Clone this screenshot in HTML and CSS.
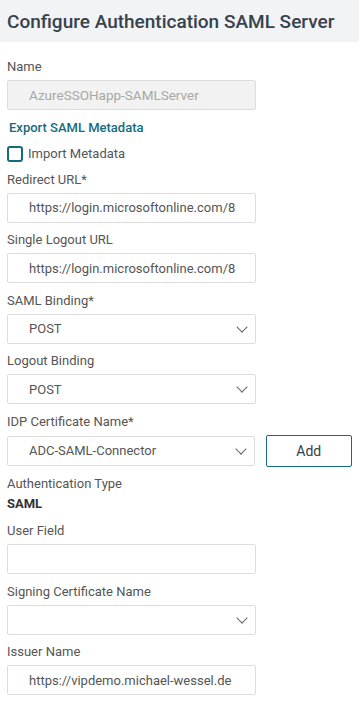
FILE: index.html
```html
<!DOCTYPE html>
<html lang="en">
<head>
    <meta charset="UTF-8">
    <meta name="viewport" content="width=device-width, initial-scale=1.0">
    <title>Configure Authentication SAML Server</title>
    <link rel="stylesheet" href="styles.css">
</head>
<body>
    <div class="page-header">
        <h1>Configure Authentication SAML Server</h1>
    </div>
    <form class="form">
        <div class="field">
            <label>Name</label>
            <input class="text-input disabled" type="text" value="AzureSSOHapp-SAMLServer" disabled>
        </div>
        <a href="#" class="export-link">Export SAML Metadata</a>
        <label class="check-row">
            <span class="checkbox"></span>
            Import Metadata
        </label>
        <div class="field">
            <label>Redirect URL*</label>
            <input class="text-input" type="text" value="https://login.microsoftonline.com/8a3b2c1d-saml2">
        </div>
        <div class="field">
            <label>Single Logout URL</label>
            <input class="text-input" type="text" value="https://login.microsoftonline.com/8a3b2c1d-saml2">
        </div>
        <div class="field">
            <label>SAML Binding*</label>
            <div class="select">POST</div>
        </div>
        <div class="field">
            <label>Logout Binding</label>
            <div class="select">POST</div>
        </div>
        <div class="field">
            <label>IDP Certificate Name*</label>
            <div class="row">
                <div class="select">ADC-SAML-Connector</div>
                <button type="button" class="add-btn">Add</button>
            </div>
        </div>
        <div class="static-field">
            <label>Authentication Type</label>
            <div class="static-value">SAML</div>
        </div>
        <div class="field">
            <label>User Field</label>
            <input class="text-input" type="text" value="">
        </div>
        <div class="field">
            <label>Signing Certificate Name</label>
            <div class="select"></div>
        </div>
        <div class="field">
            <label>Issuer Name</label>
            <input class="text-input" type="text" value="https://vipdemo.michael-wessel.de">
        </div>
    </form>
</body>
</html>
```

FILE: styles.css
```css
body {
    font-family: Roboto, "Liberation Sans", sans-serif;
    background-color: #fff;
    color: #4a4a4a;
    margin: 0;
    padding: 0;
    font-size: 13px;
}
.page-header {
    background-color: #f1f3f5;
    height: 42px;
    padding: 0 7px;
    display: flex;
    align-items: center;
}
.page-header h1 {
    margin: 0;
    font-size: 19px;
    font-weight: 500;
    color: #36424e;
}
.form {
    padding: 17px 7px 0;
}
.field {
    display: flex;
    flex-direction: column;
    gap: 5px;
    margin-bottom: 9.5px;
}
.field label, .static-field label {
    line-height: 16px;
    color: #555;
}
.text-input, .select {
    box-sizing: border-box;
    width: 249px;
    height: 30px;
    border: 1px solid #dcdcdc;
    border-radius: 2px;
    padding: 0 20px 0 21px;
    font-family: inherit;
    font-size: 13px;
    color: #555;
    background: #fff;
    outline: none;
    margin: 0;
}
.text-input.disabled {
    background: #f2f2f2;
    color: #a7a7a7;
    font-size: 13.5px;
}
.select {
    position: relative;
    display: flex;
    align-items: center;
}
.select::after {
    content: "";
    position: absolute;
    right: 9px;
    top: 8px;
    width: 7px;
    height: 7px;
    border-right: 1px solid #666;
    border-bottom: 1px solid #666;
    transform: rotate(45deg);
}
.export-link {
    display: block;
    margin: 0 0 0 2px;
    line-height: 16px;
    color: #136b7d;
    font-weight: 500;
    text-decoration: none;
}
.check-row {
    display: flex;
    align-items: center;
    gap: 5px;
    margin: 10px 0 10px;
    line-height: 16px;
    color: #555;
}
.checkbox {
    box-sizing: border-box;
    width: 16px;
    height: 16px;
    border: 2px solid #136b7d;
    border-radius: 3px;
}
.row {
    display: flex;
    align-items: center;
    gap: 11px;
}
.add-btn {
    box-sizing: border-box;
    width: 87px;
    height: 32px;
    background: #fff;
    border: 1px solid #136b7d;
    border-radius: 2px;
    font-family: inherit;
    font-size: 14px;
    color: #34404c;
}
.static-field {
    margin-bottom: 11px;
}
.static-value {
    margin-top: 4px;
    line-height: 16px;
    font-weight: 700;
    color: #333;
}
```
